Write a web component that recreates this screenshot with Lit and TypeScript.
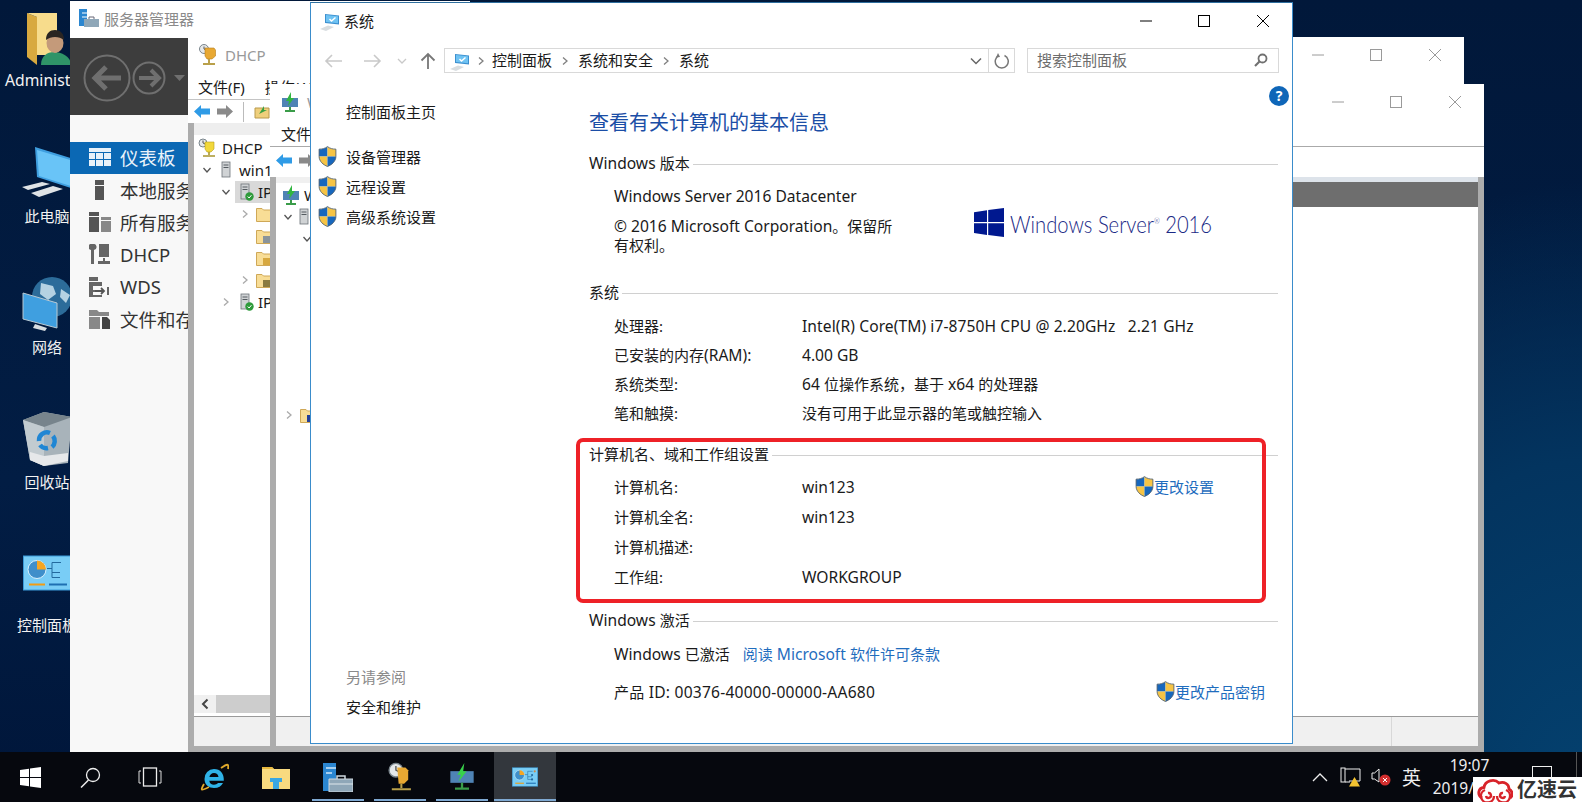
import { LitElement, html, css, svg } from "lit";
import { customElement } from "lit/decorators.js";
import { classMap } from "lit/directives/class-map.js";

// latin runs are set a little larger than the CJK runs, like the hinted Segoe UI in the shot
const mix = (s: string) =>
  s.split(/([\u3000-\u9fff\uff00-\uffef]+)/).map((p, i) => (i % 2 ? p : html`<span class="lat">${p}</span>`));

const shield = () => html`<svg class="shield" width="19" height="21" viewBox="0 0 18 20">
  <path d="M9 .6C6.5 2.4 4 3 1 3v7h8z" fill="#1767bd"/>
  <path d="M9 .6c2.5 1.8 5 2.4 8 2.4v7H9z" fill="#f6c445"/>
  <path d="M1 10c0 4.6 4 8 8 9.5V10z" fill="#f6c445"/>
  <path d="M17 10c0 4.6-4 8-8 9.5V10z" fill="#1767bd"/>
  <path d="M9 .6C6.5 2.4 4 3 1 3v7c0 4.6 4 8 8 9.500 4-1.500 8-4.900 8-9.500V3c-3 0-5.500-.6-8-2.400z" fill="none" stroke="#4b5a68" stroke-width=".8"/>
</svg>`;

const computerIcon = () => html`<svg width="20" height="20" viewBox="0 0 20 20">
  <path d="M0 18l8-3.500 6 1.500-8 4z" fill="#d8dde0"/>
  <path d="M5 3l14 1.500v9L5 12z" fill="#3c8fcf"/>
  <path d="M6 4l12 1.300v7L6 11z" fill="#6fc3f3"/>
  <path d="M9.500 8l2 2 4-3.500" fill="none" stroke="#fff" stroke-width="1.500"/>
</svg>`;

const winControls = (cls: string) => html`<div class="controls ${cls}">
  <span class="ctl"><svg width="14" height="14" viewBox="0 0 14 14"><path d="M1 7h12" stroke="currentColor" fill="none"/></svg></span>
  <span class="ctl"><svg width="14" height="14" viewBox="0 0 14 14"><rect x="1.500" y="1.500" width="11" height="11" stroke="currentColor" fill="none"/></svg></span>
  <span class="ctl"><svg width="14" height="14" viewBox="0 0 14 14"><path d="M1 1l12 12M13 1L1 13" stroke="currentColor" fill="none"/></svg></span>
</div>`;

const folderSmall = (mark = "") => html`<svg width="16" height="15" viewBox="0 0 16 15">
  <path d="M.5 1.500h5.500l1.500 1.500h8v11.500H.5z" fill="#f8dd96" stroke="#cfa857"/>
  ${mark ? svg`<rect x="7" y="7" width="8" height="7" fill="${mark}"/>` : ""}
</svg>`;

const serverSmall = (badge = true) => html`<svg width="14" height="18" viewBox="0 0 14 18">
  <rect x="1" y="1" width="8" height="15" fill="#d0d3d5" stroke="#6c7378" stroke-width=".8"/>
  <path d="M2.500 4h5M2.500 6.500h5" stroke="#545b60"/>
  ${badge
    ? svg`<circle cx="9.500" cy="13.500" r="4.200" fill="#2e9a3b"/><path d="M7.700 13.500l1.400 1.500 2.300-2.800" stroke="#fff" fill="none"/>`
    : ""}
</svg>`;

const chevron = (open: boolean, color = "") => html`<svg class="chev" width="10" height="10" viewBox="0 0 10 10">
  <path d="${open ? "M1.500 3l3.500 4 3.500-4" : "M3 1.500l4 3.500-4 3.500"}" fill="none" stroke="${color || (open ? "#555" : "#aaa")}" stroke-width="1.300"/>
</svg>`;

const dhcpIcon = () => html`<svg width="20" height="22" viewBox="0 0 20 22">
  <circle cx="6" cy="5" r="4.500" fill="#e5e8ea" stroke="#7a858c"/>
  <path d="M6 2.500V5l2 1" stroke="#555" fill="none"/>
  <path d="M7 4h9l1.500 2v6l-3.500 3H9L7 12z" fill="#e8a832" stroke="#b57d1c" stroke-width=".6"/>
  <path d="M11 15v4M5 20h12" stroke="#b9a04a" stroke-width="2"/>
</svg>`;

const dhcpTree = () => html`<svg width="20" height="20" viewBox="0 0 20 20">
  <circle cx="5" cy="5" r="4" fill="#e5e8ea" stroke="#7a858c"/>
  <path d="M5 2.500V5l2 1" stroke="#555" fill="none"/>
  <path d="M7 4h9v7l-3 3H9L7 11z" fill="#f2d83b" stroke="#b5a01c" stroke-width=".6"/>
  <path d="M11 14v3M5 18h12" stroke="#a8952f" stroke-width="1.600"/>
</svg>`;

const wdsIcon = () => html`<svg width="18" height="20" viewBox="0 0 18 20">
  <rect x="1" y="6" width="16" height="9" fill="#4f83b5"/>
  <path d="M10 0L5 9h3l-1 5 6-8h-3z" fill="#31b540"/>
  <path d="M9 15v3M4 19h10" stroke="#3a9c49" stroke-width="2"/>
</svg>`;

const panelIcon = () => html`<svg width="26" height="20" viewBox="0 0 48 35">
  <rect x=".5" y=".5" width="47" height="34" fill="#79cdf6" stroke="#3a9ad8"/>
  <circle cx="14" cy="14" r="9" fill="#3f8fca" stroke="#d8f0fc"/>
  <path d="M14 14V5a9 9 0 0 1 9 9z" fill="#f5a623"/>
  <path d="M24 13h5V7h9M29 13v4h8M29 17v5h8" fill="none" stroke="#236a9e"/>
  <circle cx="42" cy="7" r="2" fill="#c98a4a"/><circle cx="37" cy="14" r="2" fill="#236a9e"/><circle cx="37" cy="22" r="2" fill="#236a9e"/>
  <path d="M6 29h16" stroke="#f39c12" stroke-width="2"/><path d="M26 29h18" stroke="#1f6fb2" stroke-width="2"/>
</svg>`;

const arrowBlue = () => html`<svg width="16" height="13" viewBox="0 0 16 13"><path d="M0 6.500L7 0v3.500h9v6H7V13z" fill="#2f9be6"/></svg>`;
const arrowGray = () => html`<svg width="16" height="13" viewBox="0 0 16 13"><path d="M16 6.500L9 0v3.500H0v6h9V13z" fill="#8a8a8a"/></svg>`;

const sideIcons: Record<string, unknown> = {
  dash: html`<svg width="22" height="18" viewBox="0 0 22 18"><path d="M0 0h22v4H0zM0 5h6v6H0zM7 5h7v6H7zM15 5h7v6h-7zM0 12h6v6H0zM7 12h7v6H7zM15 12h7v6h-7z" fill="#e8f1f9"/></svg>`,
  local: html`<svg width="22" height="20" viewBox="0 0 22 20"><path d="M6 0h9v5H6z" fill="#555"/><path d="M6 6h9v14H6z" fill="#555"/></svg>`,
  all: html`<svg width="22" height="20" viewBox="0 0 22 20"><path d="M0 0h10v4H0zM0 5h10v15H0z" fill="#555"/><path d="M12 5h10v3H12zM12 9h10v11H12z" fill="#888"/></svg>`,
  dhcp: html`<svg width="22" height="20" viewBox="0 0 22 20"><path d="M3 0a3 3 0 0 0-1 6v14h3V6a3 3 0 0 0-1-6zM10 0h10v13H10zM14 14h2v3h5v3H9v-3h5z" fill="#666"/></svg>`,
  wds: html`<svg width="22" height="20" viewBox="0 0 22 20"><path d="M0 0h9v4H0zM0 5h13v4H4v4h6v2H4v3h9v2H0z" fill="#666"/><path d="M6 14h9m-3-3l3 3-3 3M19 10v8" stroke="#555" stroke-width="1.800" fill="none"/></svg>`,
  file: html`<svg width="22" height="20" viewBox="0 0 22 20"><path d="M0 1h8l2 2h10v4H0zM0 8h11v12H0z" fill="#888"/><path d="M13 8h5l3 3v9h-8z" fill="#444"/></svg>`,
};

const sideItems = [
  { key: "dash", text: "仪表板", active: true },
  { key: "local", text: "本地服务器", active: false },
  { key: "all", text: "所有服务器", active: false },
  { key: "dhcp", text: "DHCP", active: false },
  { key: "wds", text: "WDS", active: false },
  { key: "file", text: "文件和存储服务", active: false },
];

const desktopIcons = [
  { label: "Administ", top: 10, cls: "admin", art: html`<svg width="60" height="56" viewBox="0 0 60 56">
      <path d="M10 3l10 4v48l-10-8z" fill="#d8a93f"/><path d="M10 3h30v42H20V7z" fill="#f7dc8c"/>
      <path d="M24 55c0-9 6-13 13-13s17 4 17 13z" fill="#2f9468"/>
      <ellipse cx="38" cy="33" rx="8.500" ry="10" fill="#c49a7a"/><path d="M29 30c0-7 4-10 9-10s9 3 9 10c-5-4-13-4-18 0z" fill="#2a2522"/></svg>` },
  { label: "此电脑", top: 146, cls: "", art: html`<svg width="60" height="56" viewBox="0 0 60 56">
      <path d="M18 1l42 13v30L20 31z" fill="#3f9fe0"/><path d="M20 4l40 12v26L22 30z" fill="#69c4f7"/>
      <path d="M5 41l20-5 8 2-22 6zM14 47l22-7 10 3-24 8z" fill="#dfe3e6"/></svg>` },
  { label: "网络", top: 277, cls: "", art: html`<svg width="60" height="56" viewBox="0 0 60 56">
      <circle cx="35" cy="20" r="20" fill="#2c6c9a"/><path d="M24 6l12 3 3 8-8 6-8-6zM44 12l9 6-4 8-6-6z" fill="#b5d2e2"/>
      <path d="M6 16l34 10v25L6 42z" fill="#3f9fe0" stroke="#b9c9d3"/><path d="M18 47l12 4-2 3-12-3z" fill="#d8dde0"/></svg>` },
  { label: "回收站", top: 412, cls: "", art: html`<svg width="50" height="54" viewBox="0 0 50 54">
      <path d="M1 8L22 0l28 5-4 46-24 3-14-6z" fill="#a8b3ba"/><path d="M1 8l21 7 28-10L22 0z" fill="#77848c"/><path d="M22 15l0 39-14-6L1 8z" fill="#c2cbd0"/>
      <path d="M8 40l14 4 24-3v8l-24 5-14-6z" fill="#e6e8ea"/>
      <path d="M17 29a8 8 0 0 1 11-8m3 3a8 8 0 0 1-1 11m-4 1a8 8 0 0 1-8-3" stroke="#1f86d4" stroke-width="4.500" fill="none"/></svg>` },
  { label: "控制面板", top: 555, cls: "", art: html`<svg width="48" height="36" viewBox="0 0 48 35">
      <rect x=".5" y=".5" width="47" height="34" fill="#79cdf6" stroke="#3a9ad8"/>
      <circle cx="14" cy="14" r="9" fill="#3f8fca" stroke="#d8f0fc"/><path d="M14 14V5a9 9 0 0 1 9 9z" fill="#f5a623"/>
      <path d="M24 13h5V7h9M29 13v4h8M29 17v5h8" fill="none" stroke="#236a9e"/>
      <path d="M6 29h16" stroke="#f39c12" stroke-width="2"/><path d="M26 29h18" stroke="#1f6fb2" stroke-width="2"/></svg>` },
];

// one row of a console tree: c is the chevron slot offset, i the gap before the icon
const treeRow = (c: number, i: number, chev: unknown, icon: unknown, text = "", sel = false) =>
  html`<div class=${classMap({ "tree-row": true, sel })} style="--c:${c}px;--i:${i}px">
    <span class="slot">${chev}</span><span class="ico">${icon}</span>${text ? html`<span class="txt">${text}</span>` : ""}
  </div>`;

@customElement("app-root")
export class AppRoot extends LitElement {
  static styles = css`
    :host {
      display: block;
      width: 1582px;
      height: 802px;
      overflow: hidden;
      font-family: "Noto Sans", "Noto Sans CJK SC", sans-serif;
      font-size: 15px;
      color: #1a1a1a;
    }
    .lat { font-size: 15.600px; }
    .desktop {
      position: relative;
      width: 1582px;
      height: 802px;
      overflow: hidden;
      background:
        radial-gradient(ellipse 420px 620px at 100% 100%, #04416f 0%, #03345f 55%, rgba(3, 40, 80, 0) 100%),
        linear-gradient(180deg, #01183a 0%, #021d44 60%, #00163a 100%);
    }
    .desk-item {
      position: absolute;
      left: 5px;
      width: 84px;
      display: flex;
      flex-direction: column;
      align-items: center;
      color: #f2f2f2;
      font-size: 15px;
      line-height: 20px;
      white-space: nowrap;
    }
    .desk-item .art { height: 60px; display: flex; align-items: flex-start; justify-content: center; }
    .desk-item.admin { align-items: flex-start; }
    .desk-item.admin .art { width: 84px; }
    .desk-item.admin .label { font-size: 15.700px; }

    .win { position: absolute; background: #fff; display: flex; flex-direction: column; }
    .controls { display: flex; color: #000; flex: none; }
    .ctl { width: 58.500px; display: flex; align-items: center; justify-content: center; }
    .controls.dim { color: #9a9a9a; }

    /* server manager */
    .sm { left: 70px; top: 1px; width: 400px; height: 751px; }
    .sm-title { height: 37px; flex: none; display: flex; align-items: center; gap: 5px; padding: 0 0 2px 9px; box-sizing: border-box; color: #8a8a8a; }
    .sm-band { height: 77px; flex: none; background: #3d3d3d; box-sizing: border-box; padding: 16px 0 0 13px; }
    .sm-body { flex: 1; background: #f8f8f8; padding-top: 27px; }
    .sm-row { height: 32.400px; box-sizing: border-box; padding: 0 0 2px 19px; display: flex; align-items: center; gap: 9px; font-size: 18.500px; color: #333; white-space: nowrap; }
    .sm-row.on { background: #0b68b4; color: #eaf3fa; }
    .sm-row svg { flex: none; }

    /* consoles behind the system window */
    .dhcp { left: 188px; top: 37px; width: 130px; height: 715px; }
    .wds { left: 270px; top: 84px; width: 1214px; height: 668px; }
    .con-title { height: 36px; flex: none; display: flex; align-items: center; gap: 7px; padding-left: 10px; color: #999; white-space: nowrap; }
    .con-title .fill { flex: 1; }
    .wds .con-title { gap: 8px; padding-left: 11px; }
    .con-menu { height: 27px; flex: none; box-sizing: border-box; display: flex; align-items: center; gap: 20px; padding-left: 10px; white-space: nowrap; border-bottom: 1px solid #c4c4c4; }
    .wds .con-menu { padding-left: 11px; border-bottom-color: #aaa; }
    .con-tools { flex: none; display: flex; align-items: center; gap: 7px; padding-left: 6px; box-sizing: border-box; }
    .dhcp .con-tools { height: 23px; }
    .wds .con-tools { height: 30px; padding-bottom: 3px; }
    .tool-sep { width: 1px; height: 20px; background: #bbb; margin: 0 3px; }
    .con-lower { flex: 1; display: flex; flex-direction: column; min-height: 0; border-left: 6px solid #acacac; }
    .wds .con-lower { border-right: 6px solid #acacac; }
    .band { height: 12px; flex: none; background: #eeeeee; }
    .wds .band { height: 6px; background: #f0f0f0; }
    .con-tree { flex: 1; padding-top: 2px; overflow: hidden; min-height: 0; }
    .wds .con-tree { padding-top: 1px; }
    .panes { flex: 1; display: flex; min-height: 0; }
    .tree-pane { width: 1016px; flex: none; display: flex; flex-direction: column; }
    .right-pane { flex: 1; display: flex; flex-direction: column; }
    .bb-light { height: 5px; flex: none; background: #dde3ea; }
    .bb-gray { height: 25px; flex: none; background: #6e6e6e; border-bottom: 1px solid #fff; }
    .tree-row { height: 22px; display: flex; align-items: center; white-space: nowrap; }
    .tree-row .slot { margin-left: var(--c); flex: none; display: flex; }
    .tree-row .ico { margin-left: var(--i); flex: none; display: flex; }
    .tree-row .txt { margin-left: 4px; }
    .tree-row.sel { background: linear-gradient(90deg, transparent 41px, #d9d9d9 41px); }
    .tree-gap { height: 154px; }
    .con-scroll { height: 18px; flex: none; background: #cdcdcd; display: flex; }
    .con-scroll span { width: 22px; background: #f0f0f0; display: flex; align-items: center; justify-content: center; }
    .con-status { height: 30px; flex: none; box-sizing: border-box; background: #f0f0f0; border-top: 1px solid #9a9a9a; display: flex; justify-content: flex-end; }
    .con-scroll + .con-status { margin-top: 3px; }
    .con-status span { width: 86px; border-left: 1px solid #d8d8d8; }
    .con-foot { height: 6px; flex: none; background: #acacac; }
    .back-a { left: 1200px; top: 37px; width: 264px; height: 100px; align-items: flex-end; }
    .back-a .controls { height: 36px; align-items: center; }

    /* system window */
    .sys {
      left: 310px;
      top: 2px;
      width: 983px;
      height: 742px;
      box-sizing: border-box;
      border: 1px solid #3a8ccb;
      border-top-color: #2f6f9f;
    }
    .title { height: 36px; flex: none; display: flex; align-items: center; padding-left: 9px; }
    .title .name { margin: 0 0 2px 4px; flex: 1; }
    .nav { height: 45px; flex: none; display: flex; align-items: flex-start; padding-top: 9px; box-sizing: border-box; }
    .arrows { width: 133px; height: 25px; flex: none; display: flex; align-items: center; }
    .arrows svg { flex: none; }
    .a-back { margin-left: 13px; }
    .a-next { margin-left: 18px; }
    .a-drop { margin-left: 15px; }
    .a-up { margin-left: 13px; }
    .crumbs {
      width: 571px;
      height: 25px;
      flex: none;
      box-sizing: border-box;
      border: 1px solid #d9d9d9;
      display: flex;
      align-items: center;
      padding-left: 5px;
      white-space: nowrap;
    }
    .crumbs > span:not(.sep):not(.fill):not(.drop):not(.re) { padding-bottom: 2px; }
    .crumbs .sep { margin: 0 8px; display: flex; }
    .crumbs .sep.first { margin: 0 6px 0 6px; }
    .crumbs .sep.last { margin: 0 8px; }
    .crumbs .fill { flex: 1; }
    .crumbs .drop { width: 24px; height: 100%; display: flex; align-items: center; justify-content: center; border-right: 1px solid #d9d9d9; }
    .crumbs .re { width: 25px; height: 100%; display: flex; align-items: center; justify-content: center; }
    .search {
      width: 252px;
      height: 25px;
      flex: none;
      margin-left: 12px;
      box-sizing: border-box;
      border: 1px solid #d9d9d9;
      display: flex;
      align-items: center;
      justify-content: space-between;
      padding: 0 10px 2px 9px;
      color: #6d6d6d;
    }
    .body { flex: 1; display: flex; min-height: 0; }
    .aside {
      width: 278px;
      flex: none;
      box-sizing: border-box;
      padding: 17px 0 22px 0;
      display: flex;
      flex-direction: column;
    }
    .aside-row { height: 30px; display: flex; align-items: center; padding-left: 35px; position: relative; }
    .aside-row.home { height: 20px; margin-bottom: 20px; }
    .aside-row .shield { position: absolute; left: 7px; top: 5px; }
    .aside-fill { flex: 1; }
    .muted { color: #8a8a8a; }
    .main { flex: 1; padding: 24px 14px 0 0; min-width: 0; position: relative; }
    .help {
      position: absolute;
      top: 2px;
      right: 3px;
      width: 20px;
      height: 20px;
      border-radius: 50%;
      background: #0f66b8;
      color: #fff;
      font-weight: 700;
      font-size: 14px;
      line-height: 20px;
      text-align: center;
    }
    h1 { margin: 0; font-size: 20px; line-height: 30px; font-weight: 400; color: #1b4ea6; }
    .head { height: 22px; display: flex; align-items: center; gap: 3px; white-space: nowrap; }
    .head::after { content: ""; flex: 1; height: 1px; background: #d0d0d0; margin-top: 4px; }
    .s1 { margin-top: 13.500px; }
    .s2 { margin-top: 25px; }
    .s3 { margin-top: 15.100px; }
    .s4 { margin-top: 17px; }
    .edition { display: flex; padding: 7.500px 0 0 25px; }
    .edition .txt { width: 359.500px; flex: none; }
    .edition .line { height: 30px; line-height: 30px; }
    .edition .copy { line-height: 19px; padding-top: 6px; }
    .logo {
      display: flex;
      align-items: center;
      gap: 6px;
      margin-top: 27px;
      height: 29px;
      color: #1b2a86;
      font-family: Lato, "Noto Sans", sans-serif;
      font-weight: 300;
      font-size: 23.500px;
      line-height: 29px;
      white-space: nowrap;
    }
    .logo sup { font-size: 8px; line-height: 0; }
    .logo .txt2 { display: inline-block; padding-top: 3px; transform: scaleX(0.86); transform-origin: left center; }
    .rows { padding: 7.500px 0 0 25px; }
    .row { display: grid; grid-template-columns: 188px 1fr auto; align-items: center; height: 30px; white-space: nowrap; }
    .rows.tight { padding-top: 9px; }
    .rows.tight .row { height: 29px; }
    .rows.shift { padding-top: 8px; }
    .spread1 { letter-spacing: 0.08px; }
    .spread2 { letter-spacing: 0.22px; }
    .link { color: #1f6dbe; }
    .change { display: flex; align-items: center; }
    .mr64 { margin-right: 64px; }
    .mr13 { margin-right: 13px; }
    .row.free { display: flex; gap: 13px; }
    .row.free.sp { justify-content: space-between; margin-top: 8px; }

    /* taskbar */
    .taskbar {
      position: absolute;
      left: 0;
      right: 0;
      bottom: 0;
      height: 50px;
      background: #06080e;
      display: flex;
      color: #eee;
    }
    .tb { width: 60px; flex: none; display: flex; align-items: center; justify-content: center; box-sizing: border-box; }
    .tb.wide { width: 62px; }
    .tb.app { width: 62px; position: relative; }
    .tb.app::after { content: ""; position: absolute; left: 5px; right: 5px; bottom: 1px; height: 2px; background: #7fa9d2; }
    .tb.app.on { background: #33373d; }
    .tb.app.on::after { left: 0; right: 0; }
    .tb-gap { width: 3px; flex: none; }
    .tb-gap.thin { width: 1px; }
    .tray { flex: 1; display: flex; align-items: center; padding-left: 756px; box-sizing: border-box; position: relative; }
    .tray::after { content: ""; position: absolute; right: 5px; top: 0; bottom: 0; width: 1px; background: #555; }
    .tray svg { flex: none; }
    .t-net { margin-left: 12px; }
    .t-vol { margin-left: 10px; }
    .ime { font-size: 19px; margin-left: 11px; flex: none; }
    .clock { width: 80px; flex: none; margin-left: 8.500px; text-align: center; font-size: 15.500px; line-height: 23px; white-space: nowrap; }
    .t-note { margin: -6px 0 0 22.500px; }

    /* annotation + watermark lie over everything */
    .mark {
      position: absolute;
      left: 576px;
      top: 438px;
      width: 690px;
      height: 165px;
      box-sizing: border-box;
      border: 4px solid #ee2127;
      border-radius: 7px;
    }
    .stamp {
      position: absolute;
      left: 1473px;
      top: 777px;
      width: 109px;
      height: 25px;
      background: #fff;
      display: flex;
      align-items: center;
      gap: 4px;
      padding-left: 4px;
      box-sizing: border-box;
      color: #333;
      font-size: 20px;
      font-weight: 700;
      line-height: 25px;
      white-space: nowrap;
    }
  `;

  private renderSystem() {
    return html`<div class="win sys">
      <div class="title">
        ${computerIcon()}<span class="name">系统</span>${winControls("")}
      </div>
      <div class="nav">
        <div class="arrows">
          <svg class="a-back" width="20" height="14" viewBox="0 0 20 14"><path d="M18 7H2m6-6L2 7l6 6" fill="none" stroke="#c9c9c9" stroke-width="1.600"/></svg>
          <svg class="a-next" width="20" height="14" viewBox="0 0 20 14"><path d="M2 7h16m-6-6l6 6-6 6" fill="none" stroke="#c9c9c9" stroke-width="1.600"/></svg>
          <svg class="a-drop" width="10" height="8" viewBox="0 0 10 8"><path d="M1 2l4 4 4-4" fill="none" stroke="#c9c9c9" stroke-width="1.300"/></svg>
          <svg class="a-up" width="16" height="18" viewBox="0 0 16 18"><path d="M8 17V2M1.500 8.500L8 2l6.500 6.500" fill="none" stroke="#777" stroke-width="1.800"/></svg>
        </div>
        <div class="crumbs">
          ${computerIcon()}<span class="sep first">${chevron(false, "#808080")}</span><span>控制面板</span>
          <span class="sep">${chevron(false, "#808080")}</span><span>系统和安全</span>
          <span class="sep last">${chevron(false, "#808080")}</span><span>系统</span>
          <span class="fill"></span>
          <span class="drop"><svg width="12" height="8" viewBox="0 0 12 8"><path d="M1 1.500l5 5 5-5" fill="none" stroke="#666" stroke-width="1.500"/></svg></span>
          <span class="re"><svg width="16" height="16" viewBox="0 0 16 16"><path d="M5 2.500a6.500 6.500 0 1 0 5.500 0" fill="none" stroke="#777" stroke-width="1.500"/><path d="M4 0l2 4-4 .5z" fill="#777"/></svg></span>
        </div>
        <div class="search">
          <span>搜索控制面板</span>
          <svg width="14" height="14" viewBox="0 0 14 14"><circle cx="8.500" cy="5.500" r="4" fill="none" stroke="#707070" stroke-width="1.800"/><path d="M5.500 8.500L1 13" stroke="#707070" stroke-width="2.200"/></svg>
        </div>
      </div>
      <div class="body">
        <div class="aside">
          <div class="aside-row home">控制面板主页</div>
          <div class="aside-row">${shield()}设备管理器</div>
          <div class="aside-row">${shield()}远程设置</div>
          <div class="aside-row">${shield()}高级系统设置</div>
          <div class="aside-fill"></div>
          <div class="aside-row muted">另请参阅</div>
          <div class="aside-row">安全和维护</div>
        </div>
        <div class="main">
          <span class="help">?</span>
          <h1>查看有关计算机的基本信息</h1>
          <div class="head s1"><span>${mix("Windows 版本")}</span></div>
          <div class="edition">
            <div class="txt">
              <div class="line">${mix("Windows Server 2016 Datacenter")}</div>
              <div class="copy">${mix("© 2016 Microsoft Corporation。保留所")}<br />有权利。</div>
            </div>
            <div class="logo">
              <svg width="30" height="29" viewBox="0 0 30 29"><path d="M0 4.200l13-2V14H0zM14.200 2L30 0v14H14.200zM0 15.200h13V27L0 25zM14.200 15.200H30V29l-15.800-2z" fill="#00188f"/></svg>
              <span class="txt2">Windows Server<sup>®</sup> 2016</span>
            </div>
          </div>
          <div class="head s2">系统</div>
          <div class="rows tight">
            <div class="row"><span>处理器:</span><span class="spread1">${mix("Intel(R) Core(TM) i7-8750H CPU @ 2.20GHz\u00a0\u00a0 2.21 GHz")}</span></div>
            <div class="row"><span>${mix("已安装的内存(RAM):")}</span><span>${mix("4.00 GB")}</span></div>
            <div class="row"><span>系统类型:</span><span>${mix("64 位操作系统，基于 x64 的处理器")}</span></div>
            <div class="row"><span>笔和触摸:</span><span>没有可用于此显示器的笔或触控输入</span></div>
          </div>
          <div class="head s3">计算机名、域和工作组设置</div>
          <div class="rows">
            <div class="row"><span>计算机名:</span><span>${mix("win123")}</span><span class="change link mr64">${shield()}更改设置</span></div>
            <div class="row"><span>计算机全名:</span><span>${mix("win123")}</span></div>
            <div class="row"><span>计算机描述:</span><span></span></div>
            <div class="row"><span>工作组:</span><span>${mix("WORKGROUP")}</span></div>
          </div>
          <div class="head s4"><span>${mix("Windows 激活")}</span></div>
          <div class="rows shift">
            <div class="row free"><span>${mix("Windows 已激活")}</span><span class="link">${mix("阅读 Microsoft 软件许可条款")}</span></div>
            <div class="row free sp"><span class="spread2">${mix("产品 ID: 00376-40000-00000-AA680")}</span><span class="change link mr13">${shield()}更改产品密钥</span></div>
          </div>
        </div>
      </div>
    </div>`;
  }

  private renderBack() {
    return html`
      <div class="win sm">
        <div class="sm-title">
          <svg width="20" height="19" viewBox="0 0 20 19"><path d="M0 0h8v17H0z" fill="#2b86d0"/><path d="M3 4h10M3 8h5" stroke="#fff"/><path d="M5 10h15v8H5z" fill="#8fa7b8"/><path d="M10 10V8h5v2" fill="none" stroke="#667"/></svg>
          <span>服务器管理器</span>
        </div>
        <div class="sm-band">
          <svg width="112" height="48" viewBox="0 0 112 48">
            <g fill="none" stroke="#6f6f6f">
              <circle cx="24" cy="24" r="22.500" stroke-width="2"/><circle cx="66" cy="24" r="15.500" stroke-width="2"/>
              <path d="M38 24H12m11-11L12 24l11 11" stroke-width="5"/>
              <path d="M56 24h20m-8-8l8 8-8 8" stroke-width="4"/>
            </g>
            <path d="M91 21h11l-5.500 6z" fill="#6f6f6f"/>
          </svg>
        </div>
        <div class="sm-body">
          ${sideItems.map(
            (it) => html`<div class=${classMap({ "sm-row": true, on: it.active })}>${sideIcons[it.key]}<span>${it.text}</span></div>`
          )}
        </div>
      </div>

      <div class="win back-a">${winControls("dim")}</div>

      <div class="win dhcp">
        <div class="con-title">${dhcpIcon()}<span>DHCP</span></div>
        <div class="con-menu"><span>文件(F)</span><span>操作(A)</span></div>
        <div class="con-tools">
          ${arrowBlue()}${arrowGray()}<span class="tool-sep"></span>
          <svg width="16" height="14" viewBox="0 0 16 14"><path d="M1 3h14v10H1z" fill="#efcf7c" stroke="#b99a4c"/><path d="M5 9l5-8v4h3z" fill="#3aa142"/></svg>
        </div>
        <div class="con-lower">
          <div class="band"></div>
          <div class="con-tree">
            ${treeRow(4, 0, "", dhcpTree(), "DHCP")}
            ${treeRow(8, 9, chevron(true), serverSmall(false), "win123")}
            ${treeRow(27, 9, chevron(true), serverSmall(), "IPv4", true)}
            ${treeRow(46, 6, chevron(false), folderSmall())}
            ${treeRow(56, 6, "", folderSmall("#8a949b"))}
            ${treeRow(56, 6, "", folderSmall("#d7a83f"))}
            ${treeRow(46, 6, chevron(false), folderSmall("#8a7a40"))}
            ${treeRow(27, 9, chevron(false), serverSmall(), "IPv6")}
          </div>
          <div class="con-scroll">
            <span><svg width="10" height="12" viewBox="0 0 10 12"><path d="M7.500 1.500L3 6l4.500 4.500" fill="none" stroke="#444" stroke-width="2"/></svg></span>
          </div>
          <div class="con-status"></div>
          <div class="con-foot"></div>
        </div>
      </div>

      <div class="win wds">
        <div class="con-title">${wdsIcon()}<span>WDS</span><span class="fill"></span>${winControls("dim")}</div>
        <div class="con-menu"><span>文件(F)</span></div>
        <div class="con-tools">${arrowBlue()}${arrowGray()}</div>
        <div class="con-lower">
          <div class="panes">
            <div class="tree-pane">
              <div class="band"></div>
              <div class="con-tree">
                ${treeRow(6, 0, "", wdsIcon(), "WDS")}
                ${treeRow(7, 6, chevron(true), serverSmall(false))}
                ${treeRow(26, 0, chevron(true), "")}
                <div class="tree-gap"></div>
                ${treeRow(8, 6, chevron(false), folderSmall("#24409a"))}
              </div>
            </div>
            <div class="right-pane">
              <div class="bb-light"></div>
              <div class="bb-gray"></div>
            </div>
          </div>
          <div class="con-status"><span></span></div>
          <div class="con-foot"></div>
        </div>
      </div>
    `;
  }

  private renderTaskbar() {
    return html`<div class="taskbar">
      <div class="tb"><svg width="21" height="21" viewBox="0 0 21 21"><path d="M0 3l9-1.300V10H0zM10 1.500L21 0v10H10zM0 11h9v8.300L0 18zM10 11h11v10l-11-1.500z" fill="#fff"/></svg></div>
      <div class="tb"><svg width="21" height="21" viewBox="0 0 21 21"><circle cx="13" cy="8" r="6.500" fill="none" stroke="#eee" stroke-width="1.300"/><path d="M8.500 13L1 20.500" stroke="#eee" stroke-width="1.500"/></svg></div>
      <div class="tb"><svg width="24" height="20" viewBox="0 0 24 20"><rect x="5.500" y="1" width="13" height="18" fill="none" stroke="#eee" stroke-width="1.300"/><path d="M3 4H1v12h2M21 4h2v12h-2" fill="none" stroke="#ddd"/></svg></div>
      <div class="tb-gap"></div>
      <div class="tb wide"><svg width="29" height="28" viewBox="0 0 29 28">
        <path d="M14 6a9.500 9.500 0 0 0-9.500 10c0 6 4.500 9 9.500 9 4.500 0 7.500-2 9-5h-5c-1 1.200-2.300 1.700-4 1.700-2.500 0-4.500-1.500-4.700-4h14.500c.5-7-3.500-11.700-9.800-11.700zm-4.600 8c.3-2.300 2.200-4 4.600-4s4.200 1.600 4.500 4z" fill="#2fb3e8"/>
        <path d="M4 21C0 28 1 28 9 24M21 5c6-4 8-5 7 1" fill="none" stroke="#e0a92b" stroke-width="1.800"/></svg></div>
      <div class="tb wide"><svg width="28" height="24" viewBox="0 0 28 24">
        <path d="M0 2h10l2 2h16v20H0z" fill="#f8da7f"/><path d="M0 2h10l2 2H0z" fill="#e8b93f"/><path d="M8 13h12v4h-3v7h-6v-7H8z" fill="#3aa7e3"/></svg></div>
      <div class="tb app"><svg width="30" height="29" viewBox="0 0 30 29">
        <path d="M0 0h13v28H0z" fill="#2b86d0"/><path d="M3 5h10M3 10h6" stroke="#cfe6f7" stroke-width="1.500"/><path d="M6 16h24v13H6z" fill="#8fa7b8" stroke="#cfd9e0"/><path d="M14 16v-3h8v3" fill="none" stroke="#cfd9e0" stroke-width="1.500"/><path d="M6 21h24" stroke="#dfe7ec"/></svg></div>
      <div class="tb app"><svg width="30" height="30" viewBox="0 0 20 22">
        <circle cx="7" cy="6" r="5" fill="#e5e8ea" stroke="#7a858c"/><path d="M7 3v3l2 1" stroke="#555" fill="none"/>
        <path d="M8 4h6l2 2v7l-3 3H9z" fill="#e8a832"/><path d="M11 16v3M4 20h14" stroke="#b9a04a" stroke-width="1.500"/></svg></div>
      <div class="tb app"><svg width="24" height="28" viewBox="0 0 20 24">
        <rect x="0" y="7" width="20" height="10" fill="#4f83b5"/><path d="M12 0L6 10h3l-2 6 7-9h-3z" fill="#38d24a"/><path d="M10 17v4M4 22h12" stroke="#3a9c49" stroke-width="2"/></svg></div>
      <div class="tb-gap thin"></div>
      <div class="tb app on">${panelIcon()}</div>
      <div class="tray">
        <svg width="16" height="10" viewBox="0 0 16 10"><path d="M1 9l7-7 7 7" fill="none" stroke="#eee" stroke-width="1.300"/></svg>
        <svg class="t-net" width="21" height="20" viewBox="0 0 21 20"><path d="M5 2h15v12H9" fill="none" stroke="#eee"/><rect x="1" y="1" width="4" height="14" fill="none" stroke="#eee"/><path d="M5 15h5" stroke="#eee"/><path d="M9 19.500l5.500-9.500 5.500 9.500z" fill="#f3c331"/></svg>
        <svg class="t-vol" width="20" height="18" viewBox="0 0 20 18"><path d="M1 5h2.500L8 1v13L3.500 11H1z" fill="none" stroke="#eee"/><circle cx="14" cy="12" r="5.500" fill="#d22f2f"/><path d="M12 10l4 4m0-4l-4 4" stroke="#fff"/></svg>
        <span class="ime">英</span>
        <span class="clock">19:07<br />2019/1/11</span>
        <svg class="t-note" width="20" height="17" viewBox="0 0 20 17"><rect x=".5" y=".5" width="19" height="16" fill="none" stroke="#eee"/></svg>
      </div>
    </div>`;
  }

  render() {
    return html`<div class="desktop">
      ${desktopIcons.map(
        (d) => html`<div class="desk-item ${d.cls}" style="top:${d.top}px">
          <div class="art">${d.art}</div>
          <div class="label">${d.label}</div>
        </div>`
      )}
      ${this.renderBack()} ${this.renderSystem()} ${this.renderTaskbar()}
      <div class="mark"></div>
      <div class="stamp">
        <svg width="36" height="24" viewBox="0 0 36 24">
          <path d="M5 20C0 17 1 10 7 9.500 8 3 17 0 22 5c5-2 10 1 10 6 4 2 4 7 1 9" fill="none" stroke="#d8232a" stroke-width="2.800"/>
          <path d="M11 15a2.500 2.500 0 1 1-2 3M8 12a6.500 6.500 0 1 0 9 6" fill="none" stroke="#d8232a" stroke-width="2.400"/>
          <path d="M26 15a2.500 2.500 0 1 0 2 3M29 12a6.500 6.500 0 1 1-9 6" fill="none" stroke="#d8232a" stroke-width="2.400"/>
        </svg>
        <span>亿速云</span>
      </div>
    </div>`;
  }
}
